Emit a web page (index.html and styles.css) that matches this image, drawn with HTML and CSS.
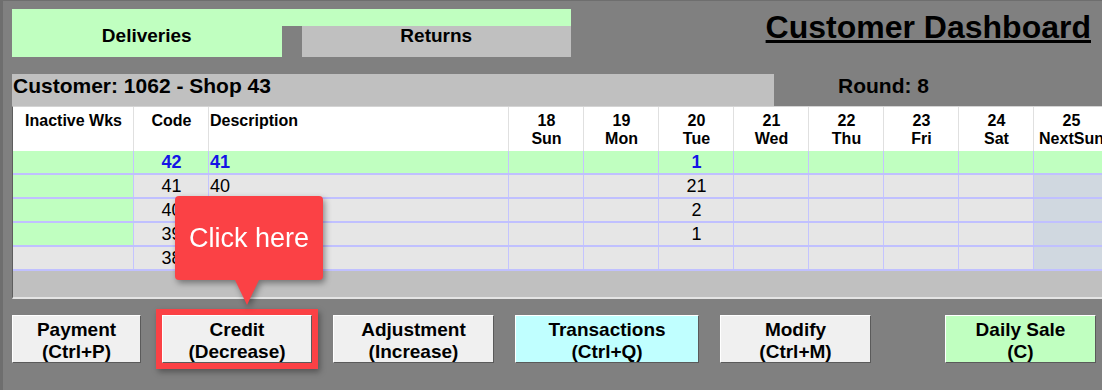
FILE: index.html
```html
<!DOCTYPE html>
<html lang="en">
<head>
    <meta charset="UTF-8">
    <meta name="viewport" content="width=device-width, initial-scale=1.0">
    <title>Customer Dashboard</title>

    <link rel="stylesheet" href="styles.css">
</head>
<body>
    <div class="screen">
        <div class="top">
            <div class="tabs">
                <div class="tab-strip"></div>
                <div class="tab-row">
                    <div class="tab active">Deliveries</div>
                    <div class="tab">Returns</div>
                </div>
            </div>
            <h1 class="title">Customer Dashboard</h1>
        </div>

        <div class="info">
            <div class="customer">Customer: 1062 - Shop 43</div>
            <div class="round">Round: 8</div>
        </div>

        <!-- grid produk per hari -->
        <div class="grid">
            <div class="row head">
                <div class="cell c">Inactive Wks</div>
                <div class="cell c">Code</div>
                <div class="cell">Description</div>
                <div class="cell c">18<br>Sun</div>
                <div class="cell c">19<br>Mon</div>
                <div class="cell c">20<br>Tue</div>
                <div class="cell c">21<br>Wed</div>
                <div class="cell c">22<br>Thu</div>
                <div class="cell c">23<br>Fri</div>
                <div class="cell c">24<br>Sat</div>
                <div class="cell c">25<br>NextSun</div>
            </div>

            <div class="row data green first">
                <div class="cell"></div>
                <div class="cell c">42</div>
                <div class="cell">41</div>
                <div class="cell"></div>
                <div class="cell"></div>
                <div class="cell c">1</div>
                <div class="cell"></div>
                <div class="cell"></div>
                <div class="cell"></div>
                <div class="cell"></div>
                <div class="cell"></div>
            </div>

            <div class="row data">
                <div class="cell new"></div>
                <div class="cell c">41</div>
                <div class="cell">40</div>
                <div class="cell"></div>
                <div class="cell"></div>
                <div class="cell c">21</div>
                <div class="cell"></div>
                <div class="cell"></div>
                <div class="cell"></div>
                <div class="cell"></div>
                <div class="cell next"></div>
            </div>

            <div class="row data">
                <div class="cell new"></div>
                <div class="cell c">40</div>
                <div class="cell">39</div>
                <div class="cell"></div>
                <div class="cell"></div>
                <div class="cell c">2</div>
                <div class="cell"></div>
                <div class="cell"></div>
                <div class="cell"></div>
                <div class="cell"></div>
                <div class="cell next"></div>
            </div>

            <div class="row data">
                <div class="cell new"></div>
                <div class="cell c">39</div>
                <div class="cell">38</div>
                <div class="cell"></div>
                <div class="cell"></div>
                <div class="cell c">1</div>
                <div class="cell"></div>
                <div class="cell"></div>
                <div class="cell"></div>
                <div class="cell"></div>
                <div class="cell next"></div>
            </div>

            <div class="row data">
                <div class="cell"></div>
                <div class="cell c">38</div>
                <div class="cell">37</div>
                <div class="cell"></div>
                <div class="cell"></div>
                <div class="cell"></div>
                <div class="cell"></div>
                <div class="cell"></div>
                <div class="cell"></div>
                <div class="cell"></div>
                <div class="cell next"></div>
            </div>
        </div>

        <div class="buttons">
            <div class="btn" id="payment">Payment<br>(Ctrl+P)</div>
            <div class="btn highlight" id="credit">Credit<br>(Decrease)</div>
            <div class="btn" id="adjustment">Adjustment<br>(Increase)</div>
            <div class="btn cyan" id="transactions">Transactions<br>(Ctrl+Q)</div>
            <div class="btn" id="modify">Modify<br>(Ctrl+M)</div>
            <div class="btn green" id="daily">Daily Sale<br>(C)</div>
        </div>

        <div class="tooltip">Click here</div>
    </div>
</body>
</html>
```

FILE: styles.css
```css
* {
    box-sizing: border-box;
}

body {
    margin: 0;
    background: #808080;
    font-family: "Liberation Sans", Arial, sans-serif;
    color: #000;
    overflow: hidden;
}

.screen {
    position: relative;
    width: 1102px;
    height: 390px;
    border-left: 3px solid #6e6e6e;
    border-top: 1px solid #6e6e6e;
    padding: 8px 11px 0 9px;
    overflow: hidden;
}

/* tabs + judul */
.top {
    display: flex;
    justify-content: space-between;
    align-items: flex-start;
    height: 48px;
}

.tabs {
    width: 559px;
}

.tab-strip {
    height: 17px;
    background: #c0ffc0;
}

.tab-row {
    display: flex;
    gap: 20px;
}

.tab {
    flex: 1;
    height: 31px;
    line-height: 20px;
    font-size: 19px;
    font-weight: bold;
    text-align: center;
    background: #c0c0c0;
}

.tab.active {
    background: #c0ffc0;
}

.title {
    margin: 0;
    font-size: 32px;
    line-height: 37px;
    text-decoration: underline;
}

.info {
    display: flex;
    margin-top: 17px;
    height: 32px;
    font-size: 21px;
    font-weight: bold;
    line-height: 24px;
}

.customer {
    width: 762px;
    padding-left: 1px;
    background: #c0c0c0;
}

.round {
    margin-left: 64px;
}

/* grid */
.grid {
    width: 1097px;
    border-left: 1px solid #5e5e5e;
    border-top: 1px solid #d4d4d4;
    border-bottom: 2px solid #e4e4e4;
    padding-bottom: 26px;
    background: #c0c0c0;
}

.row {
    display: grid;
    grid-template-columns: 121px 75px 300px repeat(8, 75px);
}

.cell {
    padding-left: 1px;
}

.c {
    text-align: center;
}

.head {
    height: 44px;
    background: #fff;
    font-size: 16px;
    font-weight: bold;
    line-height: 18px;
}

.head .cell {
    padding-top: 5px;
    border-right: 1px solid #e0e0e0;
}

.data {
    height: 24px;
    border-bottom: 2px solid #c0c0ff;
    font-size: 18px;
    line-height: 22px;
    background: #e6e6e6;
}

.data .cell {
    border-right: 1px solid #c4c4ff;
}

.data.green {
    background: #c0ffc0;
}

.data.first {
    font-weight: bold;
    color: #1414e6;
}

.cell.new {
    background: #c0ffc0;
}

.cell.next {
    background: #d0d8e0;
}

/* tombol bawah */
.buttons {
    display: flex;
    gap: 21px;
    margin-top: 16px;
}

.btn {
    flex-shrink: 0;
    height: 48px;
    padding-top: 3px;
    background: #f0f0f0;
    border: 1px solid;
    border-color: #fff #5a5a5a #5a5a5a #fff;
    font-size: 19px;
    font-weight: bold;
    line-height: 22px;
    text-align: center;
}

.btn.cyan {
    background: #c0ffff;
}

.btn.green {
    background: #c0ffc0;
}

#payment {
    width: 129px;
}

#credit {
    width: 150px;
}

#adjustment {
    width: 161px;
}

#transactions {
    width: 184px;
}

#modify {
    width: 151px;
}

#daily {
    width: 151px;
    margin-left: 53px;
}

.highlight {
    box-shadow: 0 0 0 6px #fb4145, 2px 3px 6px 6px rgba(0, 0, 0, 0.35);
}

.tooltip {
    position: absolute;
    left: 172px;
    top: 195px;
    width: 148px;
    height: 84px;
    border-radius: 4px;
    background: #fb4145;
    color: #fff;
    font-size: 27px;
    line-height: 84px;
    text-align: center;
    filter: drop-shadow(2px 3px 3px rgba(0, 0, 0, 0.4));
}

.tooltip::after {
    content: "";
    position: absolute;
    left: 60px;
    top: 100%;
    border-left: 12px solid transparent;
    border-right: 12px solid transparent;
    border-top: 25px solid #fb4145;
}
```
